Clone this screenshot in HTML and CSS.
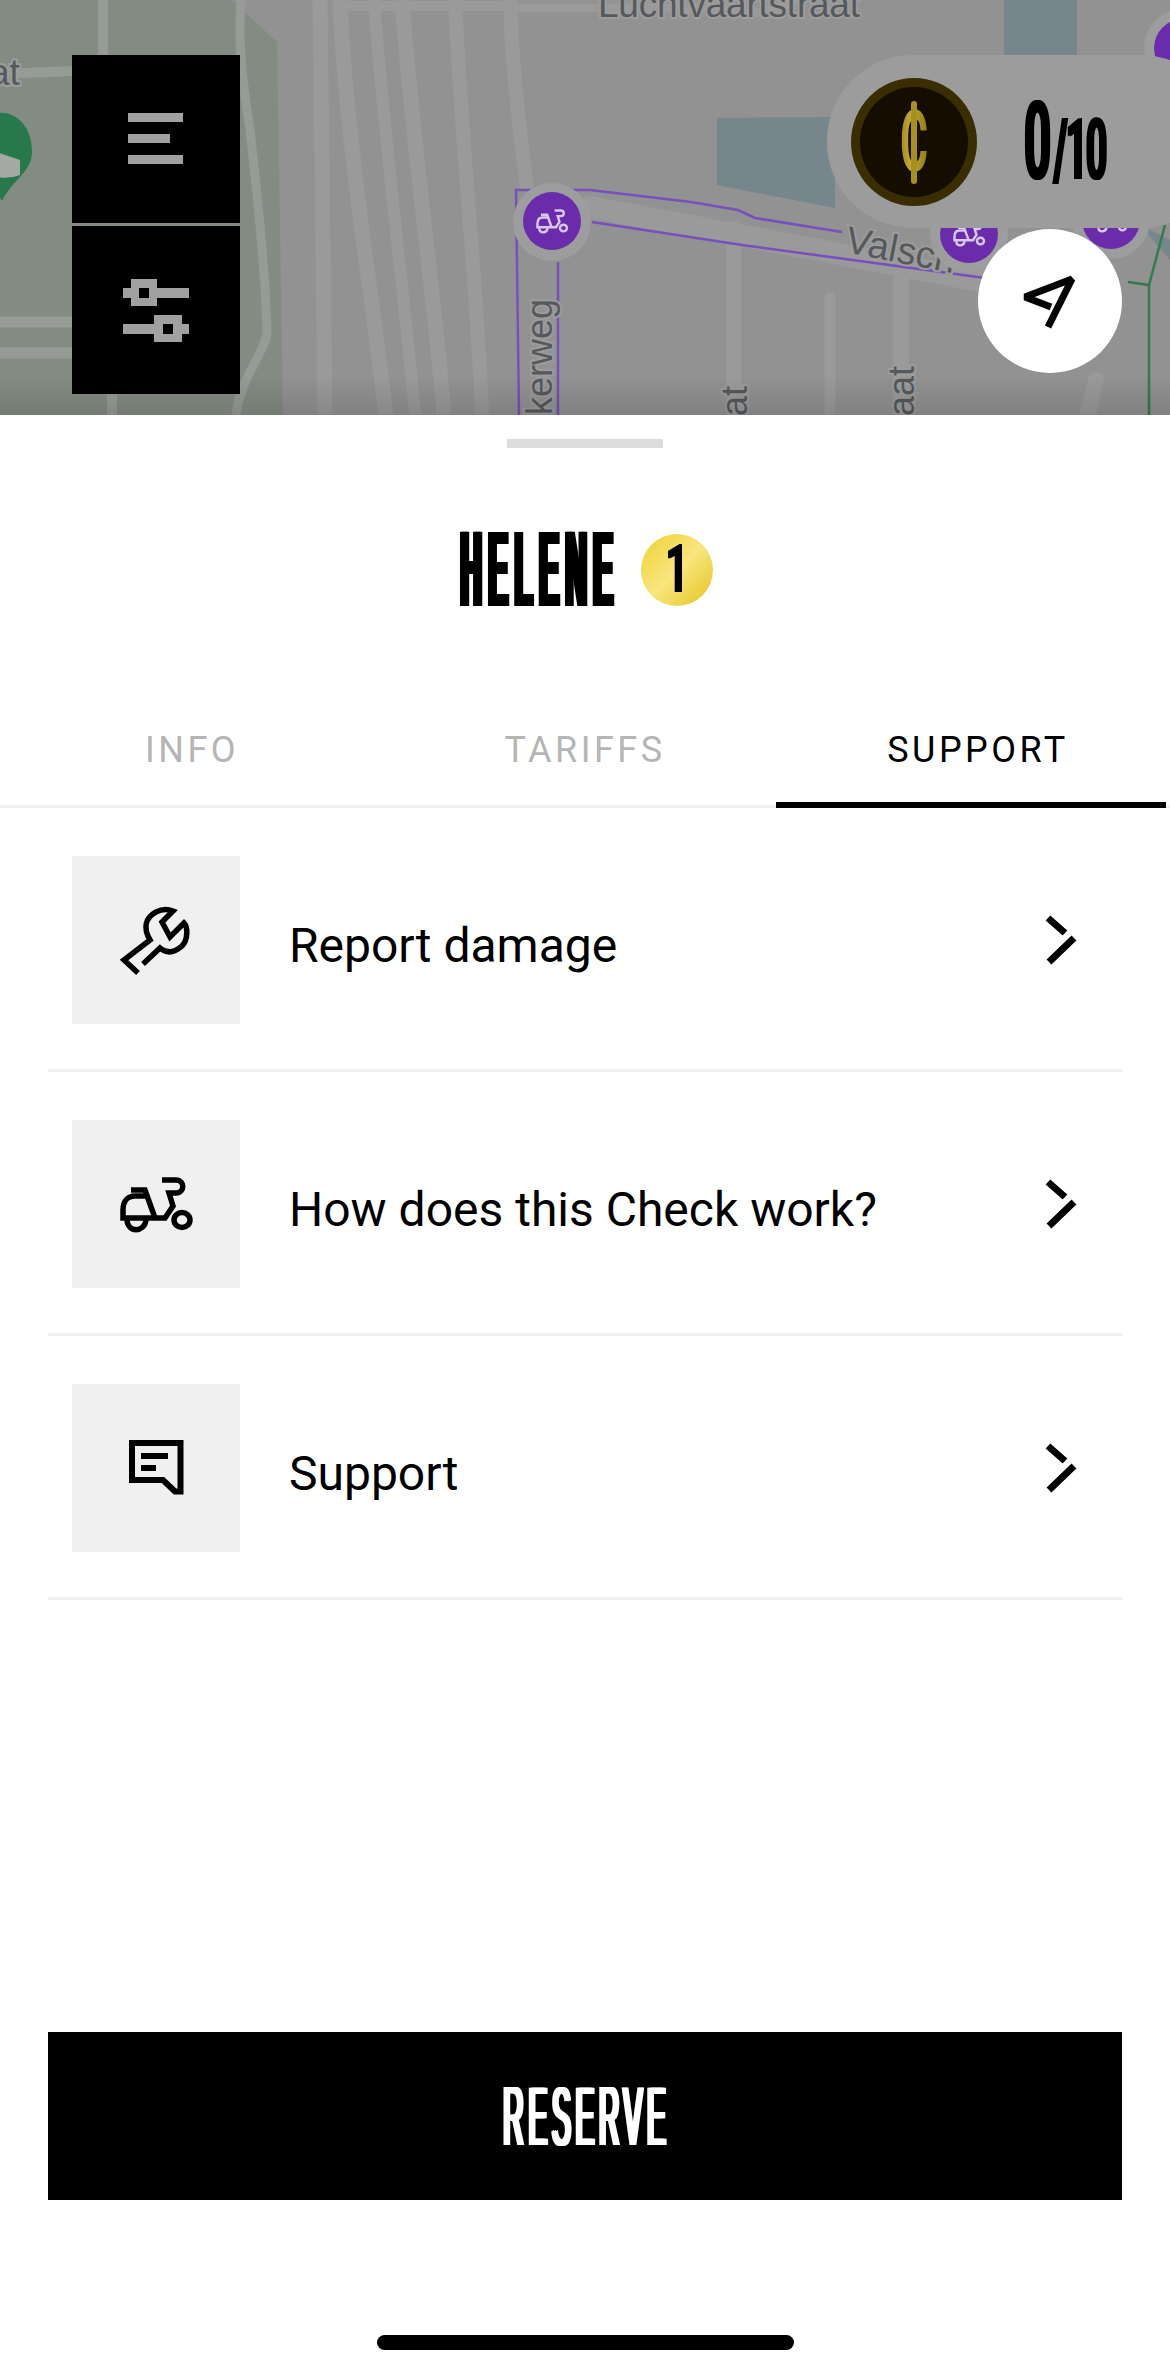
FILE: index.html
```html
<!DOCTYPE html>
<html lang="en">
<head>
    <meta charset="UTF-8">
    <meta name="viewport" content="width=device-width, initial-scale=1.0">
    <title>Helene</title>
    <link rel="stylesheet" href="styles.css">
</head>
<body>
    <div class="map">
        <svg class="map-canvas" viewBox="0 0 1170 415" width="1170" height="415">
            <defs>
                <linearGradient id="mapShade" x1="0" y1="0" x2="0" y2="1">
                    <stop offset="0" stop-color="#000" stop-opacity="0"/>
                    <stop offset="1" stop-color="#000" stop-opacity="0.12"/>
                </linearGradient>
                <symbol id="scooter" viewBox="0 0 168 168">
                    <g fill="none" stroke="currentColor" stroke-width="5.500">
                        <path d="M90 60H104C113 60 113 73 104 73H97L101 86L93 98H51V90C51 81 56 76 63 76H76"/>
                        <path d="M59 70H73L83 98"/>
                        <path d="M55 100C56 113 72 113 74 100"/>
                        <ellipse cx="110" cy="100" rx="8" ry="7.500"/>
                    </g>
                </symbol>
            </defs>
            <rect width="1170" height="415" fill="#929292"/>
            <!-- park -->
            <polygon points="0,0 232,0 277,42 283,415 0,415" fill="#838c82"/>
            <!-- water -->
            <polygon points="717,118 835,117 835,208 717,185" fill="#77858c"/>
            <rect x="1004" y="0" width="73" height="60" fill="#77858c"/>
            <polygon points="1140,225 1170,240 1170,260" fill="#77858c"/>
            <!-- roads, left -->
            <g fill="none" stroke="#969b95">
                <path d="M103 0V60" stroke-width="10"/>
                <path d="M112 390V415" stroke-width="10"/>
                <path d="M0 74L72 71" stroke-width="10"/>
                <path d="M0 322H72" stroke-width="11"/>
                <path d="M0 353H72" stroke-width="11"/>
                <path d="M241 0C238 40 241 70 250 130C258 200 266 280 267 335C260 360 240 380 236 415" stroke-width="9"/>
            </g>
            <!-- motorway -->
            <g fill="none" stroke="#9a9a9a">
                <path d="M320 0L325 415" stroke-width="15"/>
                <path d="M340 0C345 130 370 280 386 415" stroke-width="15"/>
                <path d="M374 0C385 150 405 300 415 415" stroke-width="12"/>
                <path d="M402 0C412 140 435 300 444 415" stroke-width="15"/>
                <path d="M455 0C462 150 478 300 482 415" stroke-width="14"/>
                <path d="M347 6H505" stroke-width="10"/>
                <path d="M510 0C512 70 520 130 527 190" stroke-width="14"/>
                <path d="M510 8H720C760 20 770 8 800 0" stroke-width="9"/>
            </g>
            <!-- side streets -->
            <g fill="none" stroke="#9a9a9a" stroke-linecap="round">
                <path d="M590 207L740 235L985 282" stroke-width="22"/>
                <path d="M734 228V425" stroke-width="15"/>
                <path d="M901 270V425" stroke-width="16"/>
                <path d="M830 298V425" stroke-width="11"/>
                <path d="M1096 380L1085 425" stroke-width="16"/>
            </g>
            <!-- zone outlines -->
            <g fill="none" stroke="#7650bb" stroke-width="2.500">
                <path d="M519 415L516 190H590L691 202L738 210L755 218L842 232"/>
                <path d="M558 415V262"/>
                <path d="M592 222L742 245L985 278"/>
            </g>
            <path d="M1128 282L1149 285L1165 225M1149 285V415" fill="none" stroke="#347a52" stroke-width="2.500"/>
            <!-- street names -->
            <g class="map-label">
                <text x="598" y="17" font-size="37" textLength="262">Luchtvaartstraat</text>
                <text x="-11" y="85" font-size="37">at</text>
                <text transform="translate(844 252) rotate(11)" font-size="38">Valsch</text>
                <text transform="translate(552 415) rotate(-90)" font-size="36">kerweg</text>
                <text transform="translate(747 416) rotate(-90)" font-size="36">at</text>
                <text transform="translate(914 416) rotate(-90)" font-size="36">aat</text>
            </g>
            <!-- parking pin, left edge -->
            <path d="M-30 150C-30 100 32 100 32 152C32 172 12 180 2 201C-10 180 -30 170 -30 150Z" fill="#27784a"/>
            <path d="M-10 150L20 160V175C5 180 -10 178 -10 170Z" fill="#a4aaa3"/>
            <!-- scooter pins -->
            <g class="map-pin">
                <circle cx="552" cy="222" r="39" fill="#9d9d9d"/>
                <circle cx="552" cy="221" r="29" fill="#6a2cab"/>
                <use href="#scooter" x="515" y="184" width="74" height="74"/>
            </g>
            <g class="map-pin">
                <circle cx="969" cy="234" r="39" fill="#9d9d9d"/>
                <circle cx="969" cy="234" r="29" fill="#6a2cab"/>
                <use href="#scooter" x="932" y="197" width="74" height="74"/>
            </g>
            <g class="map-pin">
                <circle cx="1111" cy="220" r="39" fill="#9d9d9d"/>
                <circle cx="1111" cy="220" r="29" fill="#6a2cab"/>
                <use href="#scooter" x="1074" y="183" width="74" height="74"/>
            </g>
            <g class="map-pin">
                <circle cx="1183" cy="48" r="39" fill="#9d9d9d"/>
                <circle cx="1183" cy="48" r="29" fill="#6a2cab"/>
            </g>
            <rect y="375" width="1170" height="40" fill="url(#mapShade)"/>
        </svg>

        <div class="map-buttons">
            <button class="map-button">
                <svg viewBox="0 0 168 168" width="168" height="168">
                    <path d="M56 58H111V67H56ZM56 79H98V88H56ZM56 100H111V109H56Z" fill="#a0a0a0"/>
                </svg>
            </button>
            <button class="map-button">
                <svg viewBox="0 0 168 168" width="168" height="168">
                    <path fill-rule="evenodd" fill="#a0a0a0" d="M59 53H85V62H117V72H85V80H59V72H51V62H59ZM67 62V72H77V62ZM82 89H110V98H117V108H110V116H82V108H51V98H82ZM91 98V108H101V98Z"/>
                </svg>
            </button>
        </div>

        <div class="check-count">
            <div class="coin"><span class="coin-mark">C</span></div>
            <div class="count-text"><span class="count-big">0</span><span class="count-small">/10</span></div>
        </div>

        <button class="locate">
            <svg viewBox="0 0 144 144" width="144" height="144">
                <path d="M70 98L94 50L47 68L73 78" fill="none" stroke="#000" stroke-width="7" stroke-miterlimit="1.500"/>
            </svg>
        </button>
    </div>

    <div class="sheet">
        <div class="handle"></div>

        <div class="title-row">
            <h1 class="title"><span>HELENE</span></h1>
            <div class="badge"><span>1</span></div>
        </div>

        <div class="tabs">
            <div class="tab">INFO</div>
            <div class="tab">TARIFFS</div>
            <div class="tab active">SUPPORT</div>
        </div>

        <div class="support-list">
            <div class="support-row">
                <div class="row-icon">
                    <svg viewBox="0 0 168 168" width="168" height="168">
                        <path d="M66 117L52 104L78 84C71 72 73 62 84 56C90 53 96 53 101 55L90 66L98 81L112 67C116 71 116 84 110 90C102 97 95 98 88 92L71 108" fill="none" stroke="#000" stroke-width="5.500"/>
                    </svg>
                </div>
                <div class="row-label">Report damage</div>
                <svg class="row-chevron" viewBox="0 0 44 64" width="44" height="64">
                    <path d="M8 10L25 25M34 30L9 54" fill="none" stroke="#000" stroke-width="7"/>
                </svg>
            </div>
            <div class="support-row">
                <div class="row-icon">
                    <svg viewBox="0 0 168 168" width="168" height="168">
                        <use href="#scooter"/>
                    </svg>
                </div>
                <div class="row-label">How does this Check work?</div>
                <svg class="row-chevron" viewBox="0 0 44 64" width="44" height="64">
                    <path d="M8 10L25 25M34 30L9 54" fill="none" stroke="#000" stroke-width="7"/>
                </svg>
            </div>
            <div class="support-row">
                <div class="row-icon">
                    <svg viewBox="0 0 168 168" width="168" height="168">
                        <path d="M60 59H108.500V107.500H103L91 96H60Z" fill="none" stroke="#000" stroke-width="6"/>
                        <path d="M69 72H96M69 84H84" fill="none" stroke="#000" stroke-width="6"/>
                    </svg>
                </div>
                <div class="row-label">Support</div>
                <svg class="row-chevron" viewBox="0 0 44 64" width="44" height="64">
                    <path d="M8 10L25 25M34 30L9 54" fill="none" stroke="#000" stroke-width="7"/>
                </svg>
            </div>
        </div>

        <button class="reserve"><span>RESERVE</span></button>
        <div class="home-bar"></div>
    </div>
</body>
</html>
```
FILE: styles.css
```css
* { box-sizing: border-box; }
body { margin: 0; width: 1170px; height: 2374px; background: #fff; font-family: Roboto, sans-serif; color: #000; display: flex; flex-direction: column; overflow: hidden; }
button { border: none; padding: 0; margin: 0; cursor: pointer; font: inherit; }
svg { display: block; }

.map { position: relative; height: 415px; flex: none; overflow: hidden; }
.map-canvas { color: #d8c8ee; }
.map-label text { font-family: "Liberation Sans", sans-serif; fill: #55595c; paint-order: stroke; stroke: #9c9c9c; stroke-width: 4px; }
.map-buttons { position: absolute; left: 72px; top: 55px; display: flex; flex-direction: column; gap: 3px; }
.map-button { width: 168px; height: 168px; background: #000; }

.check-count { position: absolute; left: 827px; top: 55px; width: 400px; height: 173px; padding-left: 24px; border-radius: 86px; background: #9c9c9c; display: flex; align-items: center; gap: 47px; }
.coin { position: relative; width: 126px; height: 128px; border-radius: 50%; background: #140d00; border: 9px solid #3a2e00; display: flex; align-items: center; justify-content: center; overflow: hidden; }
.coin::after { content: ""; position: absolute; left: 50%; top: 14px; width: 6px; height: 83px; margin-left: -3px; border-radius: 3px; background: #a8901f; }
.coin-mark { font-family: Roboto, sans-serif; font-weight: 700; font-size: 86px; line-height: 1; background: linear-gradient(90deg, #a08a1c, #c2aa38 40%, #8f7a14); -webkit-background-clip: text; background-clip: text; color: transparent; transform: scaleX(0.5); }
.count-text { width: 84px; display: flex; align-items: baseline; white-space: nowrap; font-family: Roboto, sans-serif; font-weight: 700; transform: scaleX(0.43); transform-origin: left center; text-shadow: 3px 0 #000, -3px 0 #000; }
.count-big { font-size: 110px; line-height: 1; margin-right: 6px; }
.count-small { font-size: 86px; line-height: 1; letter-spacing: -3px; }

.locate { position: absolute; left: 978px; top: 229px; width: 144px; height: 144px; border-radius: 50%; background: #fff; }

.sheet { flex: 1; display: flex; flex-direction: column; padding-top: 24px; padding-bottom: 24px; }
.handle { width: 156px; height: 9px; background: #dcdcdc; align-self: center; flex: none; }

.title-row { height: 77px; margin-top: 83px; display: flex; justify-content: center; align-items: center; gap: 25px; flex: none; padding-left: 2px; }
.title { margin: 0; width: 156px; height: 77px; display: flex; justify-content: center; align-items: center; font-family: "Liberation Sans", sans-serif; font-weight: bold; font-size: 107px; line-height: 77px; letter-spacing: 24px; white-space: nowrap; }
.title span { display: block; margin-right: -4px; transform: scaleX(0.275); text-shadow: 9px 0 #000, -9px 0 #000; }
.badge { width: 72px; height: 72px; border-radius: 50%; background: linear-gradient(135deg, #efd02f 0%, #f8e67e 50%, #e4c21e 100%); display: flex; justify-content: center; align-items: center; font-family: Roboto, sans-serif; font-weight: 700; font-size: 66px; line-height: 72px; }
.badge span { display: block; transform: scaleX(0.6); text-shadow: 1.5px 0 #000, -1.5px 0 #000; }

.tabs { margin-top: 100px; height: 100px; flex: none; display: grid; grid-template-columns: 384px 392px 390px; border-bottom: 3px solid #f0f0f0; }
.tab { height: 100px; padding: 0 0 16px 10px; display: flex; align-items: center; justify-content: center; font-size: 36px; letter-spacing: 3.5px; color: #b5b5b5; }
.tab:first-child { padding-left: 0; }
.tab.active { color: #000; border-bottom: 6px solid #000; padding-left: 14px; padding-bottom: 10px; margin-bottom: -3px; }

.support-list { margin: 0 48px; flex: none; }
.support-row { display: flex; align-items: center; padding: 48px 24px 45px; border-bottom: 3px solid #f0f0f0; }
.row-icon { width: 168px; height: 168px; background: #f0f0f0; flex: none; color: #000; }
.row-label { flex: 1; margin-left: 49px; padding-top: 11px; font-size: 48px; line-height: 54px; }
.row-chevron { flex: none; margin-right: 14px; }

.reserve { margin: auto 48px 135px; height: 168px; flex: none; background: #000; color: #fff; display: flex; justify-content: center; align-items: center; font-family: "Liberation Sans", sans-serif; font-size: 84px; letter-spacing: 14px; white-space: nowrap; }
.reserve span { display: block; margin-right: -3px; transform: scaleX(0.336); text-shadow: 6px 0 #fff, -6px 0 #fff; }

.home-bar { width: 417px; height: 15px; border-radius: 8px; background: #000; align-self: center; flex: none; }
```
